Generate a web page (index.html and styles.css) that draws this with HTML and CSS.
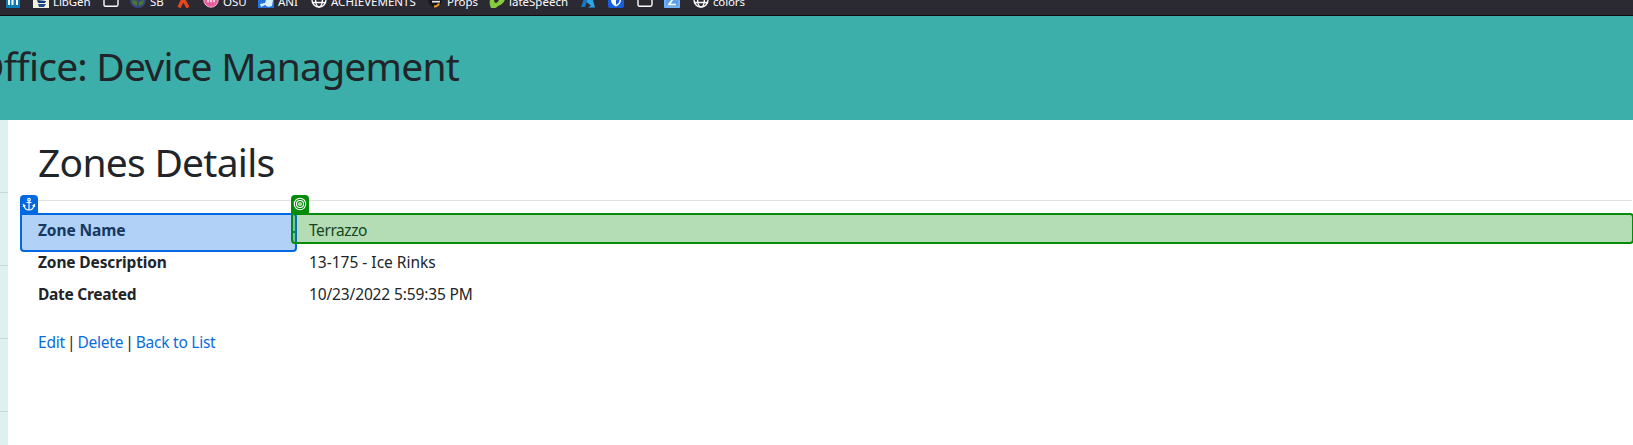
FILE: index.html
```html
<!DOCTYPE html>
<html lang="en">
<head>
<meta charset="utf-8">
<title>Zones Details</title>
<link rel="stylesheet" href="styles.css">
</head>
<body>
<svg class="defs" width="0" height="0">
  <symbol id="globe" viewBox="0 0 16 16"><g fill="none" stroke="#fbfbfe" stroke-width="1.4"><circle cx="8" cy="8" r="7"/><ellipse cx="8" cy="8" rx="3.4" ry="7"/><path d="M1 5.500h14M1 10.500h14"/></g></symbol>
  <symbol id="folder" viewBox="0 0 16 16"><path d="M1 3.500Q1 2 2.500 2H6l2 2h5.500Q15 4 15 5.500V12.500Q15 14.200 13.500 14.200H2.500Q1 14.200 1 12.500Z" fill="none" stroke="#fbfbfe" stroke-width="1.400"/></symbol>
</svg>
<nav class="bookmarks">
  <a><svg viewBox="0 0 16 16"><rect x="1" width="14" height="16" fill="#0a7bb8"/><path d="M4 6v7M7.500 13V6M7.500 9q0-2.500 2.300-2.500T12 9v4" fill="none" stroke="#fff" stroke-width="2"/></svg></a>
  <a><svg viewBox="0 0 16 16"><path d="M0 0h16v17H0z" fill="#f4f3df"/><path d="M4 8l9 1-1 2H5z" fill="#123878"/><path d="M5 12h8l-2 3H6z" fill="#1c4c92"/></svg><span class="t libgen">LibGen</span></a>
  <a><svg><use href="#folder"/></svg></a>
  <a><svg viewBox="0 0 16 16"><circle cx="8" cy="8" r="8" fill="#38467c"/><path d="M2 8l5 1v5l-4-2zM9 10l5-2-1 4-4 2z" fill="#4a7a2e"/></svg><span class="t sb">SB</span></a>
  <a><svg viewBox="0 0 16 16"><path d="M3 15.500L9 3M5 3l7 12.500" stroke="#e8471c" stroke-width="3.400"/></svg></a>
  <a><svg viewBox="0 0 16 16"><circle cx="8" cy="8" r="7.200" fill="#e85b9c" stroke="#f5b1d0"/><path d="M4 9h8" stroke="#fbd0e3" stroke-width="2.500" stroke-dasharray="2 1"/></svg><span class="t osu">OSU</span></a>
  <a><svg viewBox="0 0 16 16"><rect width="16" height="17" fill="#2370df"/><path d="M8 8h7l-1 6-4 1-3-2-4 2-1-3 5-1z" fill="#d9f0ff"/></svg><span class="t ani">ANI</span></a>
  <a><svg><use href="#globe"/></svg><span class="t ach">ACHIEVEMENTS</span></a>
  <a><svg viewBox="0 0 16 16"><circle cx="8" cy="8" r="7" fill="#17181c"/><path d="M5 9.700h8" stroke="#e6e6e6" stroke-width="1.700"/><path d="M7 14.500q4 0 5-3" fill="none" stroke="#f29a22" stroke-width="2"/></svg><span class="t props">Props</span></a>
  <a><svg viewBox="0 0 16 16"><path d="M5 0L1 8Q0 12 2 16 5 18 9 14 15 12 16 7V0z" fill="#86cc3c"/><path d="M5 7q0 4 2 4 3-1 3-4z" fill="#2b2a33"/></svg><span class="t late">lateSpeech</span></a>
  <a><svg viewBox="0 0 16 16"><path d="M6 1h5l4 14.500H8l3-2-4-3z" fill="#2ba5ea"/><path d="M6 1h4L5 15H1z" fill="#1479c4"/></svg></a>
  <a><svg viewBox="0 0 16 16"><path d="M0 0h16v14q0 2-2 2H2q-2 0-2-2z" fill="#175ddc"/><path d="M3 3h10v5q0 4-5 6.500Q3 12 3 8z" fill="#fff"/><path d="M8 5h3.500v4q0 2-3.500 4z" fill="#175ddc"/></svg></a>
  <a><svg><use href="#folder"/></svg></a>
  <a><svg viewBox="0 0 16 16"><rect width="16" height="16" fill="#5aa0ec"/><path d="M1 0v15h14V0" fill="none" stroke="#8fc1f5"/><path d="M5 4h6l-6 8.500h7" fill="none" stroke="#fff" stroke-width="1.700"/></svg></a>
  <a><svg><use href="#globe"/></svg><span class="t colors">colors</span></a>
</nav>
<header class="banner"><div class="brand">Office: Device Management</div></header>
<div class="page">
  <aside class="side"><i></i><i></i><i></i><i></i></aside>
  <main class="content">
    <h1>Zones Details</h1>
    <hr>
    <dl>
      <dt class="picked"><span class="zn">Zone Name</span>
        <div class="mark anchor"><b><svg viewBox="0 0 18 18"><g fill="none" stroke="#fff" stroke-width="1.200"><circle cx="9" cy="4.700" r="1.300"/><path d="M9 6v9M6.500 7.500h5M4 10q.5 5 5 5t5-5M3.500 12V9.700L5.500 11M14.500 12V9.700l-2 1.300"/></g></svg></b></div>
      </dt>
      <dd class="picked"><span class="terr">Terrazzo</span>
        <div class="mark target"><b><svg viewBox="0 0 18 18"><g fill="none" stroke="#fff" stroke-width="1.100"><circle cx="9" cy="9" r="5.700"/><circle cx="9" cy="9" r="3.500"/><circle cx="9" cy="9" r="1.300"/></g></svg></b><u></u></div>
      </dd>
      <dt><span class="zd">Zone Description</span></dt>
      <dd><span class="ice">13-175 - Ice Rinks</span></dd>
      <dt><span class="dc">Date Created</span></dt>
      <dd><span class="date">10/23/2022 5:59:35 PM</span></dd>
    </dl>
    <div class="links"><a class="edit">Edit</a><span class="bar">|</span><a class="del">Delete</a><span class="bar">|</span><a class="back">Back to List</a></div>
  </main>
</div>
</body>
</html>
```
FILE: styles.css
```css
* { box-sizing: border-box; }
body { margin: 0; height: 445px; overflow: hidden; background: #fff; color: #212529; font: 15.5px/24px "Noto Sans", sans-serif; }
.defs { display: block; }
.bookmarks { display: grid; grid-template-columns: 28px 70px 27px 46px 27px 55px 53px 116px 62px 91px 28px 29px 27px 29px 70px; height: 16px; padding-left: 5px; overflow: hidden; background: #2b2a33; border-bottom: 1px solid #0c0c0d; color: #fbfbfe; font-size: 11.5px; line-height: 16px; }
.bookmarks a { display: flex; gap: 4px; height: 16px; margin-top: -8px; white-space: nowrap; }
.bookmarks svg { width: 16px; height: 16px; flex: none; }
.t { margin-top: 2px; }
.libgen { letter-spacing: -.1px; }
.colors { letter-spacing: -.15px; }
.banner { height: 104px; background: #3cafaa; }
.brand { display: flex; justify-content: flex-end; width: 459px; padding-top: 24px; font-size: 39px; line-height: 52px; letter-spacing: -.8px; white-space: nowrap; }
.page { display: grid; grid-template-columns: 8px 1fr; height: 325px; }
.side { background: #def1ef; }
.side i { display: block; height: 73px; border-bottom: 1px solid #c5d8d6; }
.content { padding: 16px 0 0 30px; }
h1 { margin: 0; font-size: 39px; font-weight: 400; line-height: 52px; letter-spacing: -.74px; white-space: nowrap; }
hr { height: 1px; margin: 12px 1px 0 0; border: 0; background: #e0e0e0; }
dl { display: grid; grid-template-columns: 271px 1fr; grid-auto-rows: 24px; row-gap: 8px; margin: 17px 0 0; }
dt, dd { margin: 0; white-space: nowrap; }
dt { font-weight: 700; }
.zn { letter-spacing: -.1px; }
.zd { letter-spacing: -.13px; }
.dc { letter-spacing: -.27px; }
.terr { letter-spacing: -.42px; }
.date { letter-spacing: -.14px; }
.picked { position: relative; }
.mark { position: absolute; top: -5px; border: 2px solid; border-radius: 0 4px 4px 4px; }
.mark b { position: absolute; left: -2px; top: -20px; width: 18px; height: 19px; border-radius: 4px 4px 0 0; }
.mark svg { display: block; width: 18px; height: 18px; }
.anchor { left: -18px; width: 277px; height: 39px; border-color: #0068e0; background: rgba(0, 104, 224, .3); }
.anchor b { background: #0068e0; }
.target { left: -18px; right: -1px; height: 31px; border-color: #058b0a; background: rgba(5, 143, 10, .3); z-index: 1; }
.target b { background: #058b0a; }
.target u { position: absolute; left: 0; top: 16px; width: 3px; height: 2px; background: #087c90; }
.links { display: flex; margin-top: 24px; white-space: nowrap; }
.links a { color: #0a6cdc; }
.bar { width: 12.5px; text-align: center; }
.edit { letter-spacing: -.2px; }
.del { letter-spacing: -.22px; }
.back { letter-spacing: -.25px; }
```
